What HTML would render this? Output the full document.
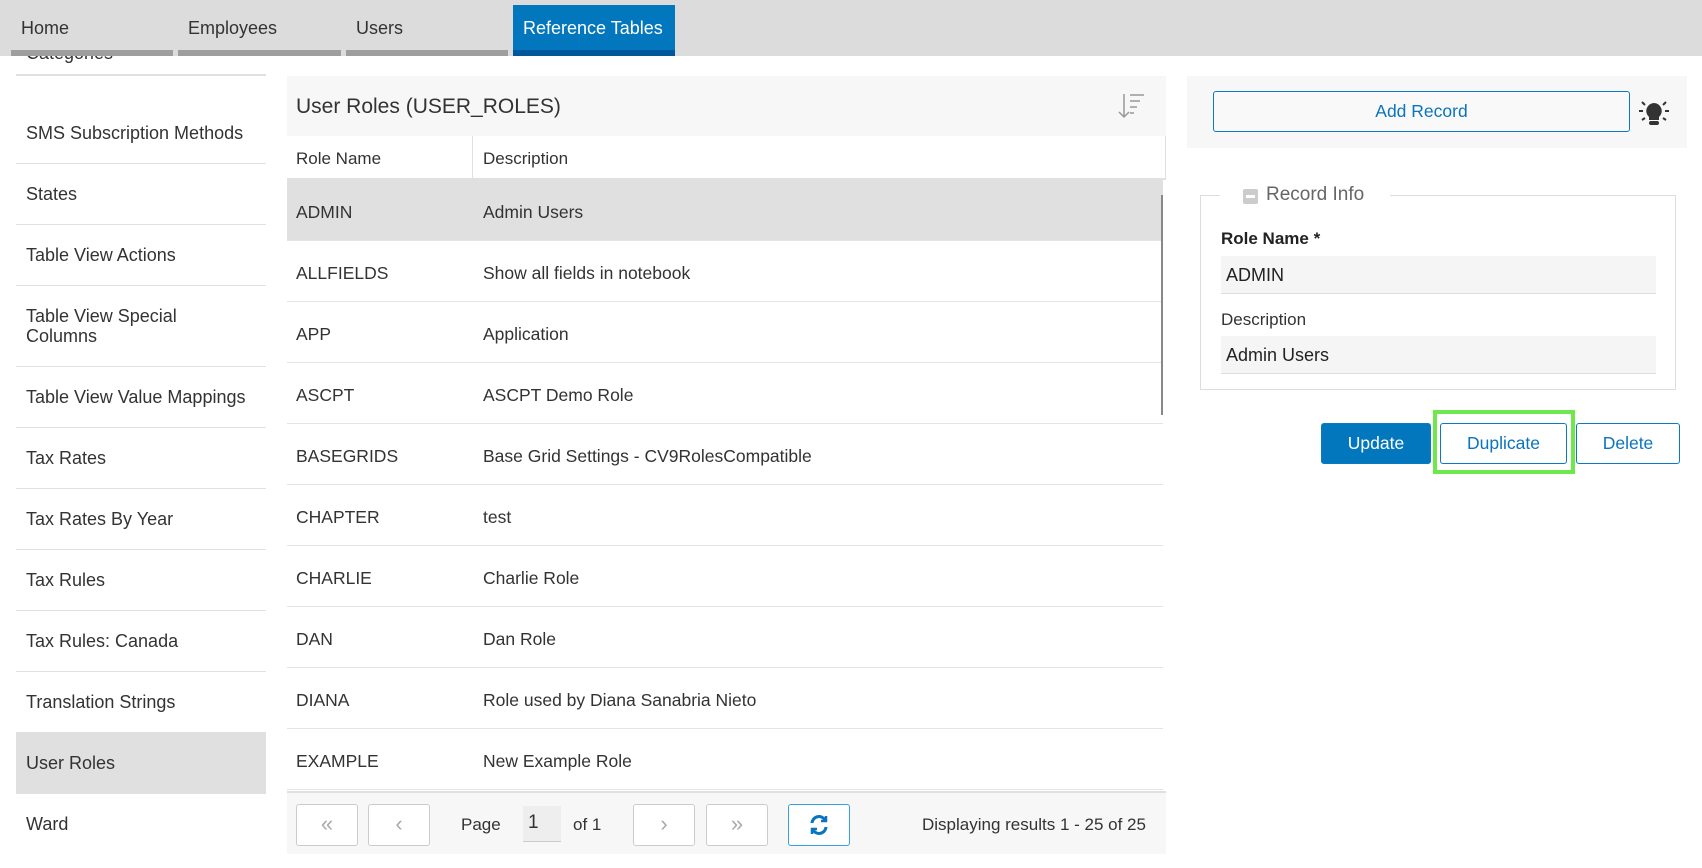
<!DOCTYPE html>
<html><head><style>
*{box-sizing:border-box;margin:0;padding:0}
body{width:1702px;height:868px;overflow:hidden;background:#fff;font-family:"Liberation Sans",sans-serif;color:#333;position:relative;font-size:17px}
.a{position:absolute}
.tab{position:absolute;top:5px;height:51px;background:#dcdcdc;border-bottom:6px solid #9e9e9e;font-size:18px;color:#333;padding:13px 10px}
.side{position:absolute;left:16px;width:250px;height:61px;border-bottom:1px solid #e0e0e0;font-size:18px;padding-left:10px;display:flex;align-items:center}
.row{position:absolute;left:287px;width:876px;height:61px;border-bottom:1px solid #e4e4e4;font-size:17.5px}
.row span{position:absolute;top:22px}
.pb{position:absolute;top:804px;width:62px;height:42px;border:1px solid #ccc;border-radius:3px;color:#aaa;font-size:22px;text-align:center;line-height:38px;background:#fff}
.btn{position:absolute;height:41px;border:1px solid #0a7ac4;border-radius:3px;color:#0a74bd;font-size:17.5px;text-align:center;line-height:39px;background:#fff}
</style></head><body>
<div class="a" style="left:0;top:0;width:1702px;height:56px;background:#dcdcdc"></div>
<div class="tab" style="left:11px;width:162px">Home</div>
<div class="tab" style="left:178px;width:163px">Employees</div>
<div class="tab" style="left:346px;width:162px">Users</div>
<div class="tab" style="left:513px;width:162px;background:#0277bd;border-bottom-color:#01579b;color:#fff">Reference Tables</div>

<div class="a" style="left:16px;top:56px;width:250px;height:20px;overflow:hidden;border-bottom:2px solid #e0e0e0"><div style="position:absolute;left:10px;top:-13px;font-size:18px">Categories</div></div>
<div class="side" style="top:103px">SMS Subscription Methods</div>
<div class="side" style="top:164px">States</div>
<div class="side" style="top:225px">Table View Actions</div>
<div class="side" style="top:286px;height:81px;line-height:20px">Table View Special<br>Columns</div>
<div class="side" style="top:367px">Table View Value Mappings</div>
<div class="side" style="top:428px">Tax Rates</div>
<div class="side" style="top:489px">Tax Rates By Year</div>
<div class="side" style="top:550px">Tax Rules</div>
<div class="side" style="top:611px">Tax Rules: Canada</div>
<div class="side" style="top:672px">Translation Strings</div>
<div class="side" style="top:733px;background:#e0e0e0">User Roles</div>
<div class="side" style="top:794px;border:none">Ward</div>

<div class="a" style="left:287px;top:76px;width:879px;height:60px;background:#f7f7f7"></div>
<div class="a" style="left:296px;top:95px;font-size:21px;color:#333">User Roles (USER_ROLES)</div>
<svg class="a" style="left:1116px;top:92px" width="32" height="28" viewBox="0 0 32 28" fill="none" stroke="#999" stroke-width="1.5"><path d="M8 2V25M3 20l5 5 5-5M14 3h14M14 9h10M14 15h7M14 21h4"/></svg>
<div class="a" style="left:287px;top:136px;width:879px;height:44px;border-bottom:2px solid #e0e0e0"></div>
<div class="a" style="left:472px;top:136px;width:1px;height:44px;background:#e0e0e0"></div>
<div class="a" style="left:1165px;top:136px;width:1px;height:44px;background:#e0e0e0"></div>
<div class="a" style="left:296px;top:149px;font-size:17px">Role Name</div>
<div class="a" style="left:483px;top:149px;font-size:17px">Description</div>

<div class="row" style="top:180px;background:#e0e0e0"><span style="left:9px">ADMIN</span><span style="left:196px">Admin Users</span></div>
<div class="row" style="top:241px"><span style="left:9px">ALLFIELDS</span><span style="left:196px">Show all fields in notebook</span></div>
<div class="row" style="top:302px"><span style="left:9px">APP</span><span style="left:196px">Application</span></div>
<div class="row" style="top:363px"><span style="left:9px">ASCPT</span><span style="left:196px">ASCPT Demo Role</span></div>
<div class="row" style="top:424px"><span style="left:9px">BASEGRIDS</span><span style="left:196px">Base Grid Settings - CV9RolesCompatible</span></div>
<div class="row" style="top:485px"><span style="left:9px">CHAPTER</span><span style="left:196px">test</span></div>
<div class="row" style="top:546px"><span style="left:9px">CHARLIE</span><span style="left:196px">Charlie Role</span></div>
<div class="row" style="top:607px"><span style="left:9px">DAN</span><span style="left:196px">Dan Role</span></div>
<div class="row" style="top:668px"><span style="left:9px">DIANA</span><span style="left:196px">Role used by Diana Sanabria Nieto</span></div>
<div class="row" style="top:729px"><span style="left:9px">EXAMPLE</span><span style="left:196px">New Example Role</span></div>
<div class="a" style="left:1161px;top:195px;width:2px;height:220px;background:#888"></div>

<div class="a" style="left:287px;top:791px;width:879px;height:63px;background:#f7f7f7;border-top:2px solid #e0e0e0"></div>
<div class="pb" style="left:296px">«</div>
<div class="pb" style="left:368px">‹</div>
<div class="a" style="left:461px;top:815px;font-size:17px">Page</div>
<div class="a" style="left:523px;top:806px;width:38px;height:36px;background:#eee;border-bottom:1px solid #ccc;font-size:19px;padding:6px 0 0 5px">1</div>
<div class="a" style="left:573px;top:815px;font-size:17px">of 1</div>
<div class="pb" style="left:633px">›</div>
<div class="pb" style="left:706px">»</div>
<div class="pb" style="left:788px;border-color:#3aa0e0"><svg width="24" height="24" viewBox="0 0 24 24" style="margin-top:8px" fill="none" stroke="#0a74bd" stroke-width="3"><path d="M5 10a7 7 0 0 1 13-3M19 14a7 7 0 0 1-13 3"/><path d="M19 3v5h-5M5 21v-5h5" stroke-width="2.5"/></svg></div>
<div class="a" style="left:922px;top:815px;font-size:17px">Displaying results 1 - 25 of 25</div>

<div class="a" style="left:1187px;top:76px;width:500px;height:72px;background:#f7f7f7"></div>
<div class="btn" style="left:1213px;top:91px;width:417px;background:#f9f9f9">Add Record</div>
<svg class="a" style="left:1637px;top:98px" width="34" height="32" viewBox="0 0 34 32"><path d="M17 5a8 8 0 0 0-5 14v3h10v-3a8 8 0 0 0-5-14z" fill="#333"/><rect x="12" y="23" width="10" height="4" rx="2" fill="#333"/><path d="M2 13h4M28 13h4M5 4l3 3M29 4l-3 3M5 22l3-2M29 22l-3-2" stroke="#333" stroke-width="2"/></svg>

<div class="a" style="left:1200px;top:195px;width:476px;height:195px;border:1px solid #ddd"></div>
<div class="a" style="left:1220px;top:183px;width:170px;height:26px;background:#fff"></div>
<div class="a" style="left:1243px;top:189px;width:15px;height:15px;background:#ccc;border-radius:2px"><div style="margin:6px 3px;height:3px;background:#fff"></div></div>
<div class="a" style="left:1266px;top:184px;font-size:19px;color:#666">Record Info</div>
<div class="a" style="left:1221px;top:229px;font-size:17px;font-weight:bold;color:#222">Role Name *</div>
<div class="a" style="left:1221px;top:256px;width:435px;height:38px;background:#f5f5f5;border-bottom:1px solid #ddd;font-size:18px;padding:9px 5px;color:#222">ADMIN</div>
<div class="a" style="left:1221px;top:310px;font-size:17px;color:#333">Description</div>
<div class="a" style="left:1221px;top:336px;width:435px;height:38px;background:#f5f5f5;border-bottom:1px solid #ddd;font-size:18px;padding:9px 5px;color:#222">Admin Users</div>

<div class="btn" style="left:1321px;top:423px;width:110px;background:#0277bd;color:#fff">Update</div>
<div class="a" style="left:1433px;top:410px;width:142px;height:64px;border:4px solid #6ee84a"></div>
<div class="btn" style="left:1440px;top:423px;width:127px">Duplicate</div>
<div class="btn" style="left:1576px;top:423px;width:104px">Delete</div>
</body></html>
